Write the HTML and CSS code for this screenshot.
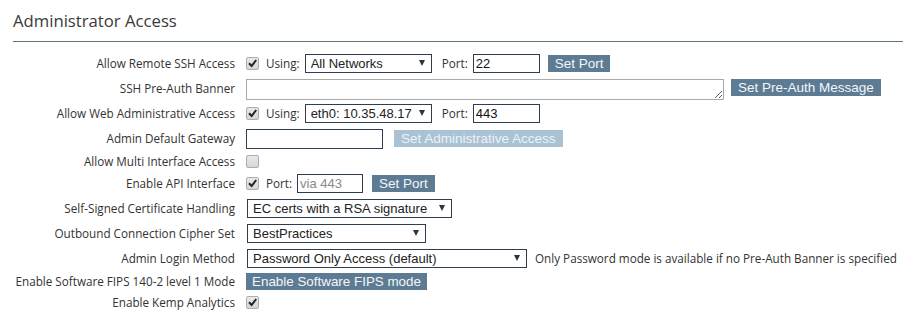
FILE: index.html
```html
<!DOCTYPE html>
<html>
<head>
<meta charset="utf-8">
<title>Administrator Access</title>
<link rel="stylesheet" href="styles.css">
</head>
<body>
<div class="header"><h1 class="title">Administrator Access</h1></div>
<div class="form">
  <div class="row">
    <div class="lbl">Allow Remote SSH Access</div>
    <div class="ctl">
      <span class="cb"><svg viewBox="0 0 13 13" width="13" height="13"><path d="M3 6.2 L5.6 9 L10.2 3" fill="none" stroke="#222" stroke-width="2"/></svg></span>
      <span class="txt using">Using:</span>
      <span class="sel w127"><select><option>All Networks</option></select></span>
      <span class="txt port">Port:</span>
      <input class="inp w67" type="text" value="22">
      <button class="btn gap8">Set Port</button>
    </div>
  </div>
  <div class="row">
    <div class="lbl">SSH Pre-Auth Banner</div>
    <div class="ctl ctl-top">
      <textarea class="ta"></textarea>
      <button class="btn gap7">Set Pre-Auth Message</button>
    </div>
  </div>
  <div class="row">
    <div class="lbl">Allow Web Administrative Access</div>
    <div class="ctl">
      <span class="cb"><svg viewBox="0 0 13 13" width="13" height="13"><path d="M3 6.2 L5.6 9 L10.2 3" fill="none" stroke="#222" stroke-width="2"/></svg></span>
      <span class="txt using">Using:</span>
      <span class="sel w127"><select><option>eth0: 10.35.48.17</option></select></span>
      <span class="txt port">Port:</span>
      <input class="inp w67" type="text" value="443">
    </div>
  </div>
  <div class="row">
    <div class="lbl">Admin Default Gateway</div>
    <div class="ctl">
      <input class="inp w137" type="text" value="">
      <button class="btn btn-dis gap11">Set Administrative Access</button>
    </div>
  </div>
  <div class="row row-xs">
    <div class="lbl">Allow Multi Interface Access</div>
    <div class="ctl">
      <span class="cb"></span>
    </div>
  </div>
  <div class="row">
    <div class="lbl">Enable API Interface</div>
    <div class="ctl">
      <span class="cb"><svg viewBox="0 0 13 13" width="13" height="13"><path d="M3 6.2 L5.6 9 L10.2 3" fill="none" stroke="#222" stroke-width="2"/></svg></span>
      <span class="txt using">Port:</span>
      <input class="inp w66" type="text" placeholder="via 443">
      <button class="btn gap9">Set Port</button>
    </div>
  </div>
  <div class="row">
    <div class="lbl">Self-Signed Certificate Handling</div>
    <div class="ctl">
      <span class="sel w205 first"><select><option>EC certs with a RSA signature</option></select></span>
    </div>
  </div>
  <div class="row">
    <div class="lbl">Outbound Connection Cipher Set</div>
    <div class="ctl">
      <span class="sel w179 first"><select><option>BestPractices</option></select></span>
    </div>
  </div>
  <div class="row">
    <div class="lbl">Admin Login Method</div>
    <div class="ctl">
      <span class="sel w280 first"><select><option>Password Only Access (default)</option></select></span>
      <span class="txt note">Only Password mode is available if no Pre-Auth Banner is specified</span>
    </div>
  </div>
  <div class="row row-sm">
    <div class="lbl">Enable Software FIPS 140-2 level 1 Mode</div>
    <div class="ctl">
      <button class="btn fips">Enable Software FIPS mode</button>
    </div>
  </div>
  <div class="row row-sm">
    <div class="lbl">Enable Kemp Analytics</div>
    <div class="ctl">
      <span class="cb"><svg viewBox="0 0 13 13" width="13" height="13"><path d="M3 6.2 L5.6 9 L10.2 3" fill="none" stroke="#222" stroke-width="2"/></svg></span>
    </div>
  </div>
</div>
</body>
</html>
```

FILE: styles.css
```css
html, body {
  margin: 0;
  padding: 0;
  background: #fff;
}
body {
  font-family: "Open Sans", "Noto Sans", sans-serif;
  color: #333;
}
.header {
  margin: 0 1px 0 13px;
  padding-top: 10px;
  padding-bottom: 10px;
  border-bottom: 1px solid #5f7380;
}
.title {
  margin: 0;
  font-size: 16.7px;
  line-height: 21px;
  font-weight: 400;
  color: #3a3a3a;
}
.form {
  margin-top: 9px;
}
.row {
  display: flex;
  align-items: center;
  height: 25px;
}
.row-sm {
  height: 21px;
}
.row-xs {
  height: 20px;
}
.lbl {
  width: 235px;
  flex: none;
  text-align: right;
  font-size: 11.7px;
  line-height: 15px;
  color: #333;
  white-space: nowrap;
}
.ctl {
  display: flex;
  align-items: center;
  margin-left: 11px;
}
.ctl-top {
  align-self: flex-start;
  align-items: flex-start;
  padding-top: 3px;
}
.cb {
  width: 13px;
  height: 13px;
  box-sizing: border-box;
  border: 1px solid #adadad;
  border-radius: 2px;
  background: linear-gradient(#e9e9e9, #d6d6d6);
  display: inline-flex;
  flex: none;
}
.cb svg {
  display: block;
  margin: -1px;
}
.txt {
  font-size: 11.7px;
  line-height: 15px;
  color: #333;
  white-space: nowrap;
}
.using {
  margin-left: 7px;
  margin-right: 5px;
}
.port {
  margin-left: 10px;
  margin-right: 5px;
}
.note {
  margin-left: 8px;
}
.sel {
  position: relative;
  display: block;
  height: 19px;
  flex: none;
}
.sel.first {
  margin-left: 1px;
}
.sel select {
  appearance: none;
  -webkit-appearance: none;
  display: block;
  width: 100%;
  height: 19px;
  box-sizing: border-box;
  border: 1px solid #2c3e50;
  border-radius: 0;
  background: #fff;
  font-family: "Liberation Sans", Arial, sans-serif;
  font-size: 13px;
  color: #222;
  padding: 0 0 0 5px;
  margin: 0;
  line-height: 17px;
}
.sel::after {
  content: "";
  position: absolute;
  right: 7px;
  top: 6px;
  width: 0;
  height: 0;
  border-left: 3px solid transparent;
  border-right: 3px solid transparent;
  border-top: 6px solid #333;
  pointer-events: none;
}
.w127 { width: 127px; }
.w205 { width: 205px; }
.w179 { width: 179px; }
.w280 { width: 280px; }
.inp {
  display: block;
  height: 19px;
  box-sizing: border-box;
  border: 1px solid #2c3e50;
  border-radius: 0;
  background: #fff;
  font-family: "Liberation Sans", Arial, sans-serif;
  font-size: 13px;
  color: #111;
  padding: 0 2px;
  margin: 0;
  outline: none;
  flex: none;
}
.inp::placeholder {
  color: #8a8a8a;
}
.w67 { width: 67px; }
.w66 { width: 66px; }
.w137 { width: 137px; height: 20px; }
.ta {
  display: block;
  width: 478px;
  height: 21px;
  box-sizing: border-box;
  border: 1px solid #a9a9a9;
  border-radius: 0;
  margin: 0;
  padding: 1px 2px;
  font-family: "Liberation Sans", Arial, sans-serif;
  font-size: 13px;
  flex: none;
}
.btn {
  display: block;
  height: 17px;
  box-sizing: border-box;
  border: none;
  border-radius: 0;
  background: #5d7c93;
  color: #f4f6f8;
  font-family: "Liberation Sans", Arial, sans-serif;
  font-size: 13.5px;
  line-height: 17px;
  padding: 0 7px;
  margin: 0;
  white-space: nowrap;
  flex: none;
}
.btn-dis {
  background: #a9c2d4;
  color: #edf2f6;
}
.gap7 { margin-left: 7px; }
.gap8 { margin-left: 8px; }
.gap9 { margin-left: 9px; }
.gap11 { margin-left: 11px; }
.fips {
  font-size: 13.4px;
  padding: 0 6px;
}
```
